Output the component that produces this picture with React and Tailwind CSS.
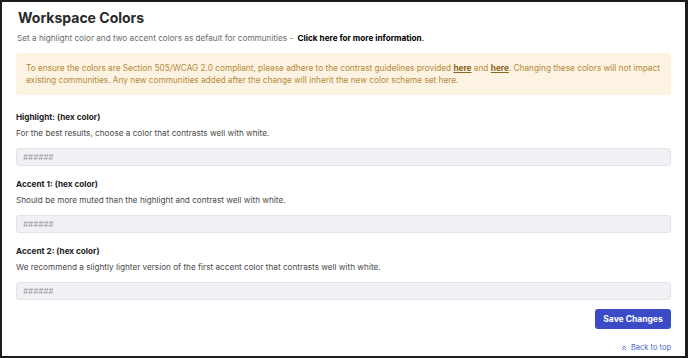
import { ChevronsUp } from "lucide-react";

const fields = [
  {
    label: "Highlight: (hex color)",
    hint: "For the best results, choose a color that contrasts well with white.",
  },
  {
    label: "Accent 1: (hex color)",
    hint: "Should be more muted than the highlight and contrast well with white.",
  },
  {
    label: "Accent 2: (hex color)",
    hint: "We recommend a slightly lighter version of the first accent color that contrasts well with white.",
  },
];

function ColorField({ label, hint, first }) {
  return (
    <div className={first ? "mt-[16px]" : "mt-[12px]"}>
      <div className="text-[8.2px] leading-[12px] font-bold text-[#222]">{label}</div>
      <div className="mt-[4px] text-[8.2px] leading-[12px] text-[#4a4a4a]">{hint}</div>
      <input
        placeholder="######"
        className="mt-[9px] block w-full h-[18px] rounded-[3px] border border-[#e2e3e8] bg-[#f0f1f4] px-[6px] text-[8px] italic outline-none placeholder:text-[#9a9a9a]"
      />
    </div>
  );
}

export default function App() {
  return (
    <div className="w-[688px] h-[358px] overflow-hidden bg-white border-2 border-r-[3px] border-[#1d1d1d] px-[14px] pt-[6px] font-['Inter',sans-serif] flex flex-col">
      <h1 className="text-[14px] leading-[20px] font-bold text-[#2a2a2a] pl-[2px]">
        Workspace Colors
      </h1>
      <p className="mt-[4px] text-[8.2px] leading-[12px] text-[#6b6b6b] pl-[1px]">
        Set a highlight color and two accent colors as default for communities -{" "}
        <span className="ml-[2px] font-bold text-black">Click here for more information</span>
        <span className="text-black">.</span>
      </p>

      <div className="mt-[9px] rounded-[3px] bg-[#fdf3e2] px-[10px] py-[9px] text-[8.25px] leading-[12px] text-[#b58a3c]">
        To ensure the colors are Section 505/WCAG 2.0 compliant, please adhere to the contrast guidelines provided{" "}
        <span className="font-bold underline text-[#8a6424]">here</span> and{" "}
        <span className="font-bold underline text-[#8a6424]">here</span>. Changing these colors will not impact
        <br />
        existing communities. Any new communities added after the change will inherit the new color scheme set here.
      </div>

      {fields.map((f, i) => (
        <ColorField key={f.label} label={f.label} hint={f.hint} first={i === 0} />
      ))}

      <div className="mt-[9px] flex justify-end">
        <button className="h-[20px] w-[76px] rounded-[3px] bg-[#3a4bc5] text-[8.5px] font-bold text-white">
          Save Changes
        </button>
      </div>

      <div className="mt-[14px] flex justify-end">
        <a className="flex items-center gap-[3px] text-[7.5px] leading-[10px] text-[#4c5fd0]">
          <ChevronsUp size={8} strokeWidth={2.5} />
          Back to top
        </a>
      </div>
    </div>
  );
}
